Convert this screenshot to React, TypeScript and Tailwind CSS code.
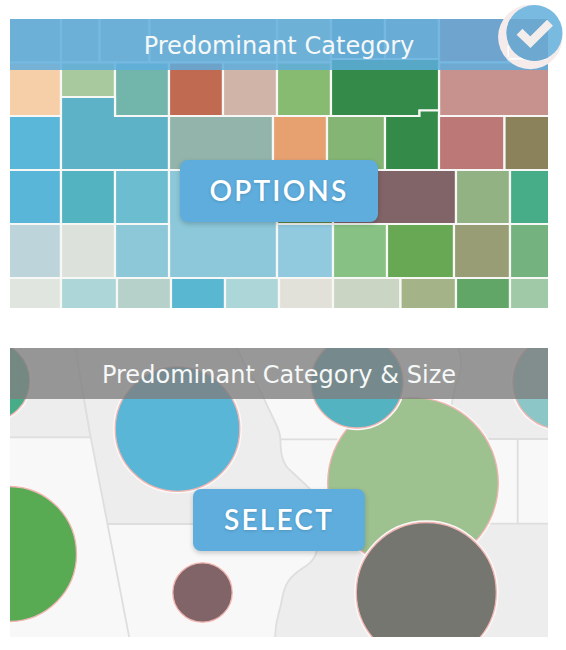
import React from "react";

type Cell = { fill: string; points: string };

const box = (x1: number, y1: number, x2: number, y2: number) =>
  `${x1},${y1} ${x2},${y1} ${x2},${y2} ${x1},${y2}`;

const cells: Cell[] = [
  // row under the title bar
  { fill: "#c0c1b4", points: box(-2, -2, 51, 43.5) },
  { fill: "#c0c1b4", points: box(51, -2, 89.7, 43.5) },
  { fill: "#c0c1b4", points: box(89.7, -2, 139.5, 43.5) },
  { fill: "#c0c1b4", points: box(139.5, -2, 267, 43.5) },
  { fill: "#c8c9b4", points: box(267, -2, 321, 43.5) },
  { fill: "#85a7a7", points: box(321, -2, 375, 40) },
  { fill: "#a9a9b0", points: box(375, -2, 429, 40) },
  { fill: "#cd7078", points: box(429, -2, 498, 43.5) },
  { fill: "#cd7078", points: box(498, -2, 540, 40) },
  // second row
  { fill: "#f6cfa8", points: box(-2, 43.5, 51, 97) },
  { fill: "#a8c89d", points: box(51, 43.5, 105, 78) },
  { fill: "#72b6ab", points: box(105, 43.5, 159, 97) },
  { fill: "#bf6a51", points: box(159, 43.5, 213, 97) },
  { fill: "#cfb4a7", points: box(213, 43.5, 267, 97) },
  { fill: "#86bb71", points: box(267, 43.5, 321, 97) },
  { fill: "#c7928e", points: box(429, 43.5, 540, 97) },
  { fill: "#348a49", points: "321,40 429,40 429,91.5 409.5,91.5 409.5,97 321,97" },
  // third row
  { fill: "#5bb7da", points: box(-2, 97, 51, 151) },
  { fill: "#5db2c7", points: "51,78 105,78 105,97 159,97 159,151 51,151" },
  { fill: "#92b4ab", points: box(159, 97, 263, 151) },
  { fill: "#e7a171", points: box(263, 97, 317, 151) },
  { fill: "#84b574", points: box(317, 97, 375, 151) },
  { fill: "#348a49", points: "375,97 409.5,97 409.5,91.5 429,91.5 429,151 375,151" },
  { fill: "#bb7876", points: box(429, 97, 494.5, 151) },
  { fill: "#8b825b", points: box(494.5, 97, 540, 151) },
  // fourth row
  { fill: "#5ab6d8", points: box(-2, 151, 51, 205) },
  { fill: "#53b3c1", points: box(51, 151, 105, 205) },
  { fill: "#6cbdd0", points: box(105, 151, 159, 205) },
  { fill: "#8cc8d9", points: box(159, 151, 267, 259) },
  { fill: "#5d8847", points: box(267, 151, 323, 205) },
  { fill: "#816468", points: box(323, 151, 446, 205) },
  { fill: "#92b284", points: box(446, 151, 500, 205) },
  { fill: "#47ad88", points: box(500, 151, 540, 205) },
  // fifth row
  { fill: "#bdd4da", points: box(-2, 205, 51, 259) },
  { fill: "#dce1db", points: box(51, 205, 105, 259) },
  { fill: "#8dc8d9", points: box(105, 205, 159, 259) },
  { fill: "#91cadf", points: box(267, 205, 323, 259) },
  { fill: "#87c183", points: box(323, 205, 377, 259) },
  { fill: "#68a854", points: box(377, 205, 444, 259) },
  { fill: "#989d76", points: box(444, 205, 500, 259) },
  { fill: "#74b27f", points: box(500, 205, 540, 259) },
  // bottom row
  { fill: "#e1e5df", points: box(-2, 259, 51, 291) },
  { fill: "#add6d8", points: box(51, 259, 107, 291) },
  { fill: "#b6d1ca", points: box(107, 259, 161, 291) },
  { fill: "#59b7d1", points: box(161, 259, 215, 291) },
  { fill: "#add6d8", points: box(215, 259, 269, 291) },
  { fill: "#e1e1d9", points: box(269, 259, 323, 291) },
  { fill: "#cad5c4", points: box(323, 259, 390.5, 291) },
  { fill: "#a5b389", points: box(390.5, 259, 446, 291) },
  { fill: "#61a567", points: box(446, 259, 500, 291) },
  { fill: "#9fc9a7", points: box(500, 259, 540, 291) },
];

const bubbles = [
  { cx: -20.5, cy: 33, r: 40.3, fill: "#47ad88" },
  { cx: -1, cy: 206, r: 67.5, fill: "#58aa53" },
  { cx: 167.5, cy: 81, r: 62.3, fill: "#5ab6d6" },
  { cx: 192.5, cy: 244.5, r: 29.7, fill: "#816468" },
  { cx: 403, cy: 135, r: 85.3, fill: "#9ec190" },
  { cx: 347, cy: 34, r: 46, fill: "#53b3c1" },
  { cx: 550, cy: 34, r: 47, fill: "#8cc6c7" },
  { cx: 416.3, cy: 244.5, r: 70, fill: "#75766f" },
];

function CountyMap() {
  return (
    <svg className="block h-full w-full" viewBox="0 0 538 289">
      <g stroke="#f7f8f5" strokeWidth="2.2">
        {cells.map((cell) => (
          <polygon key={cell.points} points={cell.points} fill={cell.fill} />
        ))}
      </g>
    </svg>
  );
}

function BubbleMap() {
  return (
    <svg className="block h-full w-full" viewBox="0 0 538 289">
      <rect width="538" height="289" fill="#f8f8f8" />
      <g fill="#ededed" stroke="#dedede" strokeWidth="1.8">
        <path d="M-2 -2H65L74 51L80.7 89.3H-2Z" />
        <path d="M65 -2H226Q236 20 242 29Q250 41 254 51L266 76Q271 86 270.5 96C271 110 274 118 281 123L298 139Q314 152 307 176H97.5L80.7 89.3L74 51Z" />
        <path d="M448 -2Q453 15 450 25Q445 36 441 60L430 91H540V-2Z" />
        <path d="M265 291C265 270 270 265 272 251C275 235 280 230 286 225C294 218 304 216 307 202L312 175.7H540V291Z" />
      </g>
      <path
        d="M97.5 176L119.5 291M270 91.3H330M507.7 91V176"
        fill="none"
        stroke="#dedede"
        strokeWidth="1.8"
      />
      {bubbles.map((b) => (
        <g key={b.fill}>
          <circle cx={b.cx} cy={b.cy} r={b.r + 0.7} fill="none" stroke="#fcf8f7" strokeWidth="3" />
          <circle cx={b.cx} cy={b.cy} r={b.r} fill={b.fill} stroke="#efb5b2" strokeWidth="1.3" />
        </g>
      ))}
    </svg>
  );
}

function SelectedBadge() {
  return (
    <svg
      className="absolute -top-[15px] left-[487px] h-[68px] w-[68px]"
      viewBox="497 4 68 68"
    >
      <defs>
        <clipPath id="badge-card">
          <rect x="497" y="19" width="51" height="53" />
        </clipPath>
      </defs>
      <circle cx="530.3" cy="37" r="32.2" fill="#f5ebeb" />
      <path d="M508.3 46V57M509 58.7H547" stroke="#fff" strokeWidth="1.5" />
      <circle cx="534.5" cy="33" r="28" fill="#79bae1" />
      <circle cx="534.5" cy="33" r="28" fill="#6ca8cf" clipPath="url(#badge-card)" />
      <path d="M519.5 31.8L530.4 42.2L550 22.8" fill="none" stroke="#f3eeec" strokeWidth="8.4" />
    </svg>
  );
}

type CardProps = {
  title: string;
  action: string;
  selected?: boolean;
  children: React.ReactNode;
};

function StyleCard({ title, action, selected, children }: CardProps) {
  return (
    <section className="relative h-[289px] w-[538px]">
      {children}
      <div className="absolute inset-0 flex flex-col items-center">
        <h2
          className={`flex h-[51px] w-full shrink-0 items-center justify-center pt-0.5 font-['DejaVu_Sans',sans-serif] text-[24px] tracking-[0.04px] whitespace-nowrap text-[#f6f8f8] ${
            selected ? "bg-[#5eaddd]/85" : "bg-[#808080]/80"
          }`}
        >
          {title}
        </h2>
        <button
          className={`mt-[90px] h-[62px] rounded-lg bg-[#5eaddd] pb-0.5 font-['Lato',sans-serif] text-[28px] font-semibold tracking-[2.2px] text-white shadow-[0_2px_5px_rgba(0,0,0,0.2)] [text-shadow:0_1px_3px_rgba(0,0,0,0.15)] ${
            selected ? "w-[198px]" : "w-[172px]"
          }`}
        >
          {action}
        </button>
      </div>
      {selected && <SelectedBadge />}
    </section>
  );
}

export default function App() {
  return (
    <main className="flex h-[650px] w-[566px] flex-col gap-10 overflow-hidden bg-white pt-[19px] pl-2.5">
      <StyleCard title="Predominant Category" action="OPTIONS" selected>
        <CountyMap />
      </StyleCard>
      <StyleCard title="Predominant Category & Size" action="SELECT">
        <BubbleMap />
      </StyleCard>
    </main>
  );
}
